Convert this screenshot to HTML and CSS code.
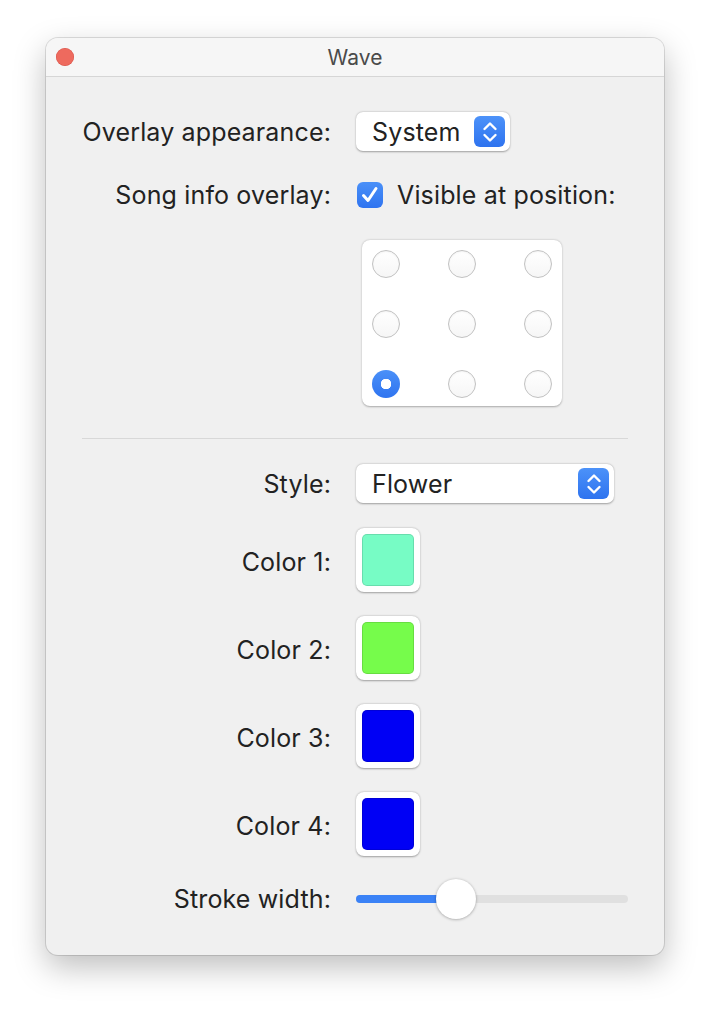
FILE: index.html
```html
<!DOCTYPE html>
<html lang="en">
<head>
    <meta charset="UTF-8">
    <title>Wave</title>
    <link rel="stylesheet" href="styles.css">
</head>
<body>
    <!-- preferences window -->
    <div class="window">
        <div class="titlebar">
            <span class="close"></span>
            <span class="title">Wave</span>
        </div>

        <div class="content">
            <div class="row">
                <label>Overlay appearance:</label>
                <div class="popup popup-small">
                    <span>System</span>
                    <span class="stepper">
                        <svg width="18" height="24" viewBox="0 0 18 24"><path d="M3.5 9 L9 3.5 L14.5 9 M3.5 15 L9 20.5 L14.5 15" fill="none" stroke="white" stroke-width="2.4" stroke-linecap="round" stroke-linejoin="round"/></svg>
                    </span>
                </div>
            </div>

            <div class="row row-check">
                <label>Song info overlay:</label>
                <div class="check-wrap">
                    <span class="checkbox">
                        <svg width="22" height="22" viewBox="0 0 22 22"><path d="M4.5 11.5 L9 16.5 L17 4.5" fill="none" stroke="white" stroke-width="3" stroke-linecap="round" stroke-linejoin="round"/></svg>
                    </span>
                    <span>Visible at position:</span>
                </div>
            </div>

            <div class="row row-grid">
                <span></span>
                <div class="position-box">
                    <span class="radio"></span>
                    <span class="radio"></span>
                    <span class="radio"></span>
                    <span class="radio"></span>
                    <span class="radio"></span>
                    <span class="radio"></span>
                    <span class="radio selected"></span>
                    <span class="radio"></span>
                    <span class="radio"></span>
                </div>
            </div>

            <div class="separator"></div>

            <div class="row row-style">
                <label>Style:</label>
                <div class="popup popup-wide">
                    <span>Flower</span>
                    <span class="stepper">
                        <svg width="18" height="24" viewBox="0 0 18 24"><path d="M3.5 9 L9 3.5 L14.5 9 M3.5 15 L9 20.5 L14.5 15" fill="none" stroke="white" stroke-width="2.4" stroke-linecap="round" stroke-linejoin="round"/></svg>
                    </span>
                </div>
            </div>

            <div class="row row-color">
                <label>Color 1:</label>
                <div class="well"><span class="swatch" style="background: #77fcc5;"></span></div>
            </div>
            <div class="row row-color">
                <label>Color 2:</label>
                <div class="well"><span class="swatch" style="background: #76fc4b;"></span></div>
            </div>
            <div class="row row-color">
                <label>Color 3:</label>
                <div class="well"><span class="swatch" style="background: #0000f5;"></span></div>
            </div>
            <div class="row row-color">
                <label>Color 4:</label>
                <div class="well"><span class="swatch" style="background: #0000f5;"></span></div>
            </div>

            <div class="row row-slider">
                <label>Stroke width:</label>
                <div class="slider">
                    <span class="track-fill" style="width: 100px;"></span>
                    <span class="knob" style="left: 80px;"></span>
                </div>
            </div>
        </div>
    </div>
</body>
</html>
```

FILE: styles.css
```css
/* preferences window */
body {
    margin: 0;
    padding: 0;
    min-height: 1010px;
    background: #ffffff;
    font-family: Inter, "Liberation Sans", sans-serif;
    color: #222222;
}

.window {
    width: 618px;
    height: 917px;
    margin: 38px 0 0 46px;
    background: #f0f0f0;
    border-radius: 12px;
    box-shadow: 0 0 0 1px rgba(0, 0, 0, 0.12), 0 12px 32px rgba(0, 0, 0, 0.26);
    overflow: hidden;
}

.titlebar {
    position: relative;
    height: 38px;
    background: #f6f6f6;
    border-bottom: 1px solid #d6d6d6;
    display: flex;
    align-items: center;
    justify-content: center;
}
.close {
    position: absolute;
    left: 10px;
    top: 10px;
    width: 18px;
    height: 18px;
    border-radius: 50%;
    background: #ee6a5e;
    box-shadow: inset 0 0 0 0.5px rgba(200, 60, 50, 0.6);
}
.title {
    font-size: 21px;
    color: #4a4a4a;
    letter-spacing: 0.1px;
}

.content {
    padding: 35px 0 0 0;
}

.row {
    display: grid;
    grid-template-columns: 285px 1fr;
    column-gap: 25px;
    align-items: center;
    font-size: 25px;
    line-height: 26px;
    letter-spacing: 0.15px;
}
.row label {
    text-align: right;
}

/* popup buttons */
.popup {
    height: 39px;
    background: #ffffff;
    border-radius: 7px;
    box-shadow: 0 0.5px 2px rgba(0, 0, 0, 0.35);
    display: flex;
    align-items: center;
    justify-content: space-between;
    padding: 0 5px 0 16px;
    box-sizing: border-box;
}
.popup-small {
    width: 154px;
}
.popup-wide {
    width: 258px;
}
.stepper {
    width: 31px;
    height: 31px;
    border-radius: 6px;
    background: linear-gradient(#4c92f9, #2e73ef);
    display: flex;
    align-items: center;
    justify-content: center;
}

/* checkbox */
.row-check {
    margin-top: 31px;
}
.check-wrap {
    display: flex;
    align-items: center;
    gap: 14px;
}
.checkbox {
    width: 26px;
    height: 26px;
    margin-left: 1px;
    border-radius: 6px;
    background: linear-gradient(#4a90f8, #2f74f0);
    display: flex;
    align-items: center;
    justify-content: center;
}

/* position grid */
.row-grid {
    margin-top: 32px;
}
.position-box {
    width: 200px;
    height: 166px;
    margin-left: 6px;
    box-sizing: border-box;
    padding: 10px 10px 8px 10px;
    background: #ffffff;
    border-radius: 8px;
    box-shadow: 0 0.5px 2px rgba(0, 0, 0, 0.3);
    display: grid;
    grid-template-columns: 28px 28px 28px;
    grid-template-rows: 28px 28px 28px;
    justify-content: space-between;
    align-content: space-between;
}
.radio {
    width: 28px;
    height: 28px;
    border-radius: 50%;
    box-sizing: border-box;
    border: 1px solid #c2c2c2;
    background: linear-gradient(#ffffff, #f6f6f6);
    box-shadow: inset 0 1px 2px rgba(0, 0, 0, 0.05);
}
.radio.selected {
    border: none;
    background: radial-gradient(circle, #ffffff 0 5px, transparent 5.5px), linear-gradient(#4a90f8, #2f74f0);
    box-shadow: none;
}

.separator {
    height: 1px;
    background: #d8d8d8;
    margin: 32px 36px 0 36px;
}

.row-style {
    margin-top: 25px;
}

/* color wells */
.row-color {
    margin-top: 25px;
}
.row-color + .row-color {
    margin-top: 24px;
}
.row-color label {
    padding-top: 3px;
}
.well {
    width: 64px;
    height: 64px;
    box-sizing: border-box;
    padding: 6px;
    background: #ffffff;
    border-radius: 8px;
    box-shadow: 0 0.5px 2px rgba(0, 0, 0, 0.35);
}
.swatch {
    display: block;
    width: 52px;
    height: 52px;
    border-radius: 5px;
    box-shadow: inset 0 0 0 1px rgba(0, 0, 0, 0.12);
}

/* slider */
.row-slider {
    margin-top: 23px;
}
.slider {
    position: relative;
    width: 272px;
    height: 40px;
}
.slider::before {
    content: "";
    position: absolute;
    left: 0;
    right: 0;
    top: 16px;
    height: 8px;
    border-radius: 4px;
    background: #e0e0e0;
}
.track-fill {
    position: absolute;
    left: 0;
    top: 16px;
    height: 8px;
    border-radius: 4px;
    background: #3b82f6;
}
.knob {
    position: absolute;
    top: 0;
    width: 40px;
    height: 40px;
    border-radius: 50%;
    background: #ffffff;
    box-shadow: 0 0.5px 3px rgba(0, 0, 0, 0.35);
}
```
